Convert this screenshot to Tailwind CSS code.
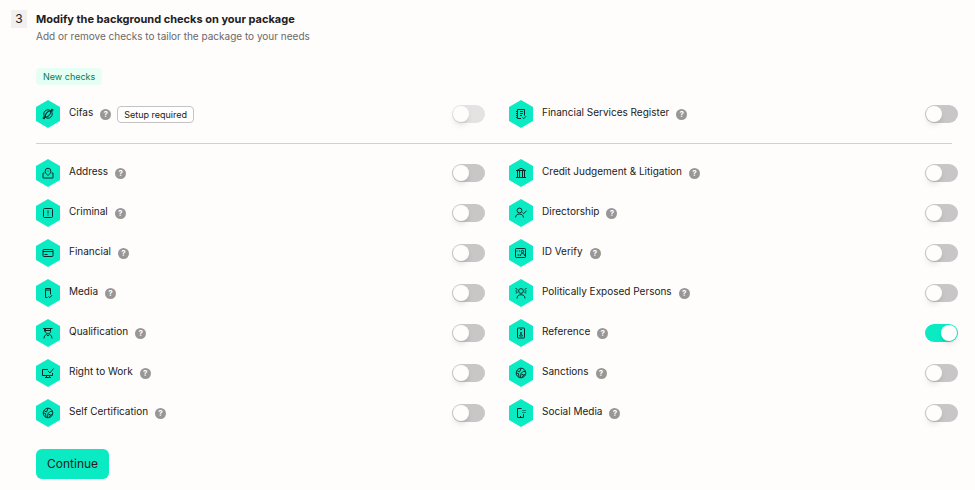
<!DOCTYPE html>
<html lang="en">
<head>
  <meta charset="utf-8">
  <meta name="viewport" content="width=device-width, initial-scale=1">
  <title>Background checks</title>
  <script src="https://cdn.jsdelivr.net/npm/@tailwindcss/browser@4"></script>
</head>
<body class="bg-[#fefdfc] font-[Inter,sans-serif] text-[#222020]">
  <!-- icon sprite, every icon is drawn inside the 24x28 hexagon -->
  <svg class="hidden">
    <symbol id="hex" viewBox="0 0 24 28"><path d="M12 0 24 7v14l-12 7L0 21V7z" fill="#0aebc4" stroke="none"/></symbol>
    <symbol id="cifas" viewBox="0 0 24 28">
      <circle cx="12" cy="14" r="4.200"/><ellipse cx="12" cy="14" rx="3.600" ry="1.700" transform="rotate(-50 12 14)"/>
      <path d="M7.500 16.500 7 18.500l2 .2M16.500 11.500l.5-2-2-.2M7.500 18.500l2-2M14.500 11.500l2-2"/>
    </symbol>
    <symbol id="address" viewBox="0 0 24 28">
      <path d="M12 16.500c-1.800-1.700-2.900-3-2.900-4.400a2.900 2.900 0 0 1 5.800 0c0 1.400-1.100 2.700-2.900 4.400zM12 11.500v1M8.500 14H7v5h10v-5h-1.500"/>
    </symbol>
    <symbol id="criminal" viewBox="0 0 24 28">
      <rect x="7.500" y="9.500" width="9" height="9" rx="1"/><path d="M12 11.500v3M12 15.500v1"/>
    </symbol>
    <symbol id="financial" viewBox="0 0 24 28">
      <rect x="7" y="10.500" width="10" height="7" rx="1"/><path d="M7 12.500h10M8.500 15.500h3"/>
    </symbol>
    <symbol id="media" viewBox="0 0 24 28">
      <path d="M11.500 18.500H9.500v-9h5v6M9.500 11h5M12.500 17.500l1.300 1.200 2.200-2.500"/>
    </symbol>
    <symbol id="qualification" viewBox="0 0 24 28">
      <path d="M7 9.500h9.500M8.500 9.500v3M9.500 11.500h5M9.500 9.500v3c0 1.300 1 2.300 2.500 2.300s2.500-1 2.500-2.300v-3M8 19.500c0-2 .8-3.300 2.500-4l1.500 1.500 1.500-1.500C15.200 16.200 16 17.500 16 19.500"/>
    </symbol>
    <symbol id="work" viewBox="0 0 24 28">
      <path d="M12 10.500H6.500v6h10v-2.500M12 12l2 2 3.500-4.500M10.500 16.500v2M13.500 16.500v2M9 18.500h6"/>
    </symbol>
    <symbol id="globe" viewBox="0 0 24 28">
      <circle cx="12" cy="14" r="4.800"/>
      <path d="M8 11.500l2.500 1.500 1.500-3.500M7.500 14l2 .5.500 3.500M11.500 18.500l.5-4 2-2h2.500M12.500 15l2 1 1.500-.5M13.500 18l1-2"/>
    </symbol>
    <symbol id="register" viewBox="0 0 24 28">
      <path d="M12 18.500H8.500v-9H15.500v6M7 11.500h2M7 13.500h2M7 15.500h2M7 17.500h2M11 11.500h3M11 13.500h3M11 15.500h2M13.500 17.500l1.300 1.200 2.200-2.500"/>
    </symbol>
    <symbol id="court" viewBox="0 0 24 28">
      <path d="M7 11.500h10M8.500 11l3.500-1.700 3.500 1.700M7 18.500h10M8.500 12v6M10.500 12v6M13.500 12v6M15.500 12v6"/>
    </symbol>
    <symbol id="director" viewBox="0 0 24 28">
      <circle cx="10.500" cy="11.500" r="2.400"/><path d="M6.500 18.500c.3-2.300 1.700-3.500 4-3.500s3.700 1.200 4 3.500M13.500 13.500l1.200 1.200 2.800-3"/>
    </symbol>
    <symbol id="idcard" viewBox="0 0 24 28">
      <rect x="6.500" y="9.500" width="10" height="9" rx=".7"/><circle cx="13.500" cy="12.500" r="1.200"/>
      <path d="M11.500 16.800c0-1.700.8-2.400 2-2.400s2 .7 2 2.400M8 11.500v1M10.500 11.500v1M8.500 16h2"/>
    </symbol>
    <symbol id="exposed" viewBox="0 0 24 28">
      <circle cx="12" cy="12" r="2.400"/><path d="M8 19.500c0-2.500 1.500-3.800 4-3.800s4 1.300 4 3.800M6.500 9.500l2 .8M6.500 12h1.800M6.800 14.200l1.700-.8M17.500 9.500l-2 .8M17.500 12h-1.800M17.200 14.200l-1.700-.8"/>
    </symbol>
    <symbol id="reference" viewBox="0 0 24 28">
      <rect x="8.500" y="9" width="7" height="10" rx=".6"/><path d="M11 10.500h2M10.500 17c0-1 .6-1.500 1.500-1.500s1.500.5 1.500 1.500z"/><circle cx="12" cy="14" r=".6"/>
    </symbol>
    <symbol id="social" viewBox="0 0 24 28">
      <path d="M12.500 9.500H8.500v9h6v-3.500M13.500 11.500h1M15.500 11.500h1M13.500 13.500h1M15.500 13.500h1M11 17.500h1"/>
    </symbol>
  </svg>

  <main class="pt-[10px] pr-[17px] pb-2 pl-[11px]">
    <header class="flex items-start gap-[9px]">
      <span class="flex h-[18px] w-4 items-center justify-center bg-[#f3efed] text-xs">3</span>
      <div>
        <h1 class="text-[11px] leading-[18px] font-bold">Modify the background checks on your package</h1>
        <p class="text-[10px] leading-[16px] text-[#6b6868]">Add or remove checks to tailor the package to your needs</p>
      </div>
    </header>

    <form class="pl-[25px]">
      <h2 class="mt-6 w-fit rounded bg-[#e6fff4] px-[7px] text-[9px] leading-[17px] text-[#087a50]">New checks</h2>

      <div class="mt-[15px] grid grid-cols-2 gap-x-6 gap-y-3">
        <div class="flex h-7 items-center">
          <svg class="h-7 w-6 shrink-0 fill-none stroke-[#0b2e2b]" stroke-width="1"><use href="#hex"/><use href="#cifas"/></svg>
          <label for="check-cifas" class="ml-[9px] pb-[3px] text-[10px]">Cifas</label>
          <button type="button" aria-label="About Cifas" class="ml-[7px] h-[11px] w-[11px] rounded-full bg-[#999696] text-[8px] leading-[11px] font-bold text-white">?</button>
          <span class="ml-[6px] rounded border border-[#c5c2c2] bg-white px-[6px] text-[9px] leading-[15px]">Setup required</span>
          <input id="check-cifas" type="checkbox" disabled class="ml-auto h-[18px] w-[33px] appearance-none rounded-full bg-[#e4e2e3] p-[1px] before:block before:h-4 before:w-4 before:rounded-full before:bg-[#fefdfc] before:shadow-md">
        </div>
        <div class="flex h-7 items-center">
          <svg class="h-7 w-6 shrink-0 fill-none stroke-[#0b2e2b]" stroke-width="1"><use href="#hex"/><use href="#register"/></svg>
          <label for="check-register" class="ml-[9px] pb-[3px] text-[10px]">Financial Services Register</label>
          <button type="button" aria-label="About Financial Services Register" class="ml-[7px] h-[11px] w-[11px] rounded-full bg-[#999696] text-[8px] leading-[11px] font-bold text-white">?</button>
          <input id="check-register" type="checkbox" class="ml-auto h-[18px] w-[33px] appearance-none rounded-full bg-[#c9c6c8] p-[1px] before:block before:h-4 before:w-4 before:rounded-full before:bg-[#fefdfc] before:shadow-md checked:bg-[#0aebc4] checked:pl-4">
        </div>
      </div>

      <hr class="mt-[15px] mr-[6px] mb-[15px] border-[#d3d1d0]">

      <div class="grid grid-cols-2 gap-x-6 gap-y-3">
        <div class="flex h-7 items-center">
          <svg class="h-7 w-6 shrink-0 fill-none stroke-[#0b2e2b]" stroke-width="1"><use href="#hex"/><use href="#address"/></svg>
          <label for="check-address" class="ml-[9px] pb-[3px] text-[10px]">Address</label>
          <button type="button" aria-label="About Address" class="ml-[7px] h-[11px] w-[11px] rounded-full bg-[#999696] text-[8px] leading-[11px] font-bold text-white">?</button>
          <input id="check-address" type="checkbox" class="ml-auto h-[18px] w-[33px] appearance-none rounded-full bg-[#c9c6c8] p-[1px] before:block before:h-4 before:w-4 before:rounded-full before:bg-[#fefdfc] before:shadow-md checked:bg-[#0aebc4] checked:pl-4">
        </div>
        <div class="flex h-7 items-center">
          <svg class="h-7 w-6 shrink-0 fill-none stroke-[#0b2e2b]" stroke-width="1"><use href="#hex"/><use href="#court"/></svg>
          <label for="check-credit" class="ml-[9px] pb-[3px] text-[10px]">Credit Judgement &amp; Litigation</label>
          <button type="button" aria-label="About Credit Judgement &amp; Litigation" class="ml-[7px] h-[11px] w-[11px] rounded-full bg-[#999696] text-[8px] leading-[11px] font-bold text-white">?</button>
          <input id="check-credit" type="checkbox" class="ml-auto h-[18px] w-[33px] appearance-none rounded-full bg-[#c9c6c8] p-[1px] before:block before:h-4 before:w-4 before:rounded-full before:bg-[#fefdfc] before:shadow-md checked:bg-[#0aebc4] checked:pl-4">
        </div>
        <div class="flex h-7 items-center">
          <svg class="h-7 w-6 shrink-0 fill-none stroke-[#0b2e2b]" stroke-width="1"><use href="#hex"/><use href="#criminal"/></svg>
          <label for="check-criminal" class="ml-[9px] pb-[3px] text-[10px]">Criminal</label>
          <button type="button" aria-label="About Criminal" class="ml-[7px] h-[11px] w-[11px] rounded-full bg-[#999696] text-[8px] leading-[11px] font-bold text-white">?</button>
          <input id="check-criminal" type="checkbox" class="ml-auto h-[18px] w-[33px] appearance-none rounded-full bg-[#c9c6c8] p-[1px] before:block before:h-4 before:w-4 before:rounded-full before:bg-[#fefdfc] before:shadow-md checked:bg-[#0aebc4] checked:pl-4">
        </div>
        <div class="flex h-7 items-center">
          <svg class="h-7 w-6 shrink-0 fill-none stroke-[#0b2e2b]" stroke-width="1"><use href="#hex"/><use href="#director"/></svg>
          <label for="check-directorship" class="ml-[9px] pb-[3px] text-[10px]">Directorship</label>
          <button type="button" aria-label="About Directorship" class="ml-[7px] h-[11px] w-[11px] rounded-full bg-[#999696] text-[8px] leading-[11px] font-bold text-white">?</button>
          <input id="check-directorship" type="checkbox" class="ml-auto h-[18px] w-[33px] appearance-none rounded-full bg-[#c9c6c8] p-[1px] before:block before:h-4 before:w-4 before:rounded-full before:bg-[#fefdfc] before:shadow-md checked:bg-[#0aebc4] checked:pl-4">
        </div>
        <div class="flex h-7 items-center">
          <svg class="h-7 w-6 shrink-0 fill-none stroke-[#0b2e2b]" stroke-width="1"><use href="#hex"/><use href="#financial"/></svg>
          <label for="check-financial" class="ml-[9px] pb-[3px] text-[10px]">Financial</label>
          <button type="button" aria-label="About Financial" class="ml-[7px] h-[11px] w-[11px] rounded-full bg-[#999696] text-[8px] leading-[11px] font-bold text-white">?</button>
          <input id="check-financial" type="checkbox" class="ml-auto h-[18px] w-[33px] appearance-none rounded-full bg-[#c9c6c8] p-[1px] before:block before:h-4 before:w-4 before:rounded-full before:bg-[#fefdfc] before:shadow-md checked:bg-[#0aebc4] checked:pl-4">
        </div>
        <div class="flex h-7 items-center">
          <svg class="h-7 w-6 shrink-0 fill-none stroke-[#0b2e2b]" stroke-width="1"><use href="#hex"/><use href="#idcard"/></svg>
          <label for="check-id" class="ml-[9px] pb-[3px] text-[10px]">ID Verify</label>
          <button type="button" aria-label="About ID Verify" class="ml-[7px] h-[11px] w-[11px] rounded-full bg-[#999696] text-[8px] leading-[11px] font-bold text-white">?</button>
          <input id="check-id" type="checkbox" class="ml-auto h-[18px] w-[33px] appearance-none rounded-full bg-[#c9c6c8] p-[1px] before:block before:h-4 before:w-4 before:rounded-full before:bg-[#fefdfc] before:shadow-md checked:bg-[#0aebc4] checked:pl-4">
        </div>
        <div class="flex h-7 items-center">
          <svg class="h-7 w-6 shrink-0 fill-none stroke-[#0b2e2b]" stroke-width="1"><use href="#hex"/><use href="#media"/></svg>
          <label for="check-media" class="ml-[9px] pb-[3px] text-[10px]">Media</label>
          <button type="button" aria-label="About Media" class="ml-[7px] h-[11px] w-[11px] rounded-full bg-[#999696] text-[8px] leading-[11px] font-bold text-white">?</button>
          <input id="check-media" type="checkbox" class="ml-auto h-[18px] w-[33px] appearance-none rounded-full bg-[#c9c6c8] p-[1px] before:block before:h-4 before:w-4 before:rounded-full before:bg-[#fefdfc] before:shadow-md checked:bg-[#0aebc4] checked:pl-4">
        </div>
        <div class="flex h-7 items-center">
          <svg class="h-7 w-6 shrink-0 fill-none stroke-[#0b2e2b]" stroke-width="1"><use href="#hex"/><use href="#exposed"/></svg>
          <label for="check-pep" class="ml-[9px] pb-[3px] text-[10px]">Politically Exposed Persons</label>
          <button type="button" aria-label="About Politically Exposed Persons" class="ml-[7px] h-[11px] w-[11px] rounded-full bg-[#999696] text-[8px] leading-[11px] font-bold text-white">?</button>
          <input id="check-pep" type="checkbox" class="ml-auto h-[18px] w-[33px] appearance-none rounded-full bg-[#c9c6c8] p-[1px] before:block before:h-4 before:w-4 before:rounded-full before:bg-[#fefdfc] before:shadow-md checked:bg-[#0aebc4] checked:pl-4">
        </div>
        <div class="flex h-7 items-center">
          <svg class="h-7 w-6 shrink-0 fill-none stroke-[#0b2e2b]" stroke-width="1"><use href="#hex"/><use href="#qualification"/></svg>
          <label for="check-qualification" class="ml-[9px] pb-[3px] text-[10px]">Qualification</label>
          <button type="button" aria-label="About Qualification" class="ml-[7px] h-[11px] w-[11px] rounded-full bg-[#999696] text-[8px] leading-[11px] font-bold text-white">?</button>
          <input id="check-qualification" type="checkbox" class="ml-auto h-[18px] w-[33px] appearance-none rounded-full bg-[#c9c6c8] p-[1px] before:block before:h-4 before:w-4 before:rounded-full before:bg-[#fefdfc] before:shadow-md checked:bg-[#0aebc4] checked:pl-4">
        </div>
        <div class="flex h-7 items-center">
          <svg class="h-7 w-6 shrink-0 fill-none stroke-[#0b2e2b]" stroke-width="1"><use href="#hex"/><use href="#reference"/></svg>
          <label for="check-reference" class="ml-[9px] pb-[3px] text-[10px]">Reference</label>
          <button type="button" aria-label="About Reference" class="ml-[7px] h-[11px] w-[11px] rounded-full bg-[#999696] text-[8px] leading-[11px] font-bold text-white">?</button>
          <input id="check-reference" type="checkbox" checked class="ml-auto h-[18px] w-[33px] appearance-none rounded-full bg-[#c9c6c8] p-[1px] before:block before:h-4 before:w-4 before:rounded-full before:bg-[#fefdfc] before:shadow-md checked:bg-[#0aebc4] checked:pl-4">
        </div>
        <div class="flex h-7 items-center">
          <svg class="h-7 w-6 shrink-0 fill-none stroke-[#0b2e2b]" stroke-width="1"><use href="#hex"/><use href="#work"/></svg>
          <label for="check-work" class="ml-[9px] pb-[3px] text-[10px]">Right to Work</label>
          <button type="button" aria-label="About Right to Work" class="ml-[7px] h-[11px] w-[11px] rounded-full bg-[#999696] text-[8px] leading-[11px] font-bold text-white">?</button>
          <input id="check-work" type="checkbox" class="ml-auto h-[18px] w-[33px] appearance-none rounded-full bg-[#c9c6c8] p-[1px] before:block before:h-4 before:w-4 before:rounded-full before:bg-[#fefdfc] before:shadow-md checked:bg-[#0aebc4] checked:pl-4">
        </div>
        <div class="flex h-7 items-center">
          <svg class="h-7 w-6 shrink-0 fill-none stroke-[#0b2e2b]" stroke-width="1"><use href="#hex"/><use href="#globe"/></svg>
          <label for="check-sanctions" class="ml-[9px] pb-[3px] text-[10px]">Sanctions</label>
          <button type="button" aria-label="About Sanctions" class="ml-[7px] h-[11px] w-[11px] rounded-full bg-[#999696] text-[8px] leading-[11px] font-bold text-white">?</button>
          <input id="check-sanctions" type="checkbox" class="ml-auto h-[18px] w-[33px] appearance-none rounded-full bg-[#c9c6c8] p-[1px] before:block before:h-4 before:w-4 before:rounded-full before:bg-[#fefdfc] before:shadow-md checked:bg-[#0aebc4] checked:pl-4">
        </div>
        <div class="flex h-7 items-center">
          <svg class="h-7 w-6 shrink-0 fill-none stroke-[#0b2e2b]" stroke-width="1"><use href="#hex"/><use href="#globe"/></svg>
          <label for="check-self" class="ml-[9px] pb-[3px] text-[10px]">Self Certification</label>
          <button type="button" aria-label="About Self Certification" class="ml-[7px] h-[11px] w-[11px] rounded-full bg-[#999696] text-[8px] leading-[11px] font-bold text-white">?</button>
          <input id="check-self" type="checkbox" class="ml-auto h-[18px] w-[33px] appearance-none rounded-full bg-[#c9c6c8] p-[1px] before:block before:h-4 before:w-4 before:rounded-full before:bg-[#fefdfc] before:shadow-md checked:bg-[#0aebc4] checked:pl-4">
        </div>
        <div class="flex h-7 items-center">
          <svg class="h-7 w-6 shrink-0 fill-none stroke-[#0b2e2b]" stroke-width="1"><use href="#hex"/><use href="#social"/></svg>
          <label for="check-social" class="ml-[9px] pb-[3px] text-[10px]">Social Media</label>
          <button type="button" aria-label="About Social Media" class="ml-[7px] h-[11px] w-[11px] rounded-full bg-[#999696] text-[8px] leading-[11px] font-bold text-white">?</button>
          <input id="check-social" type="checkbox" class="ml-auto h-[18px] w-[33px] appearance-none rounded-full bg-[#c9c6c8] p-[1px] before:block before:h-4 before:w-4 before:rounded-full before:bg-[#fefdfc] before:shadow-md checked:bg-[#0aebc4] checked:pl-4">
        </div>
      </div>

      <button type="submit" class="mt-[22px] h-[30px] rounded-md bg-[#0aebc4] px-[11px] text-xs">Continue</button>
    </form>
  </main>
</body>
</html>
